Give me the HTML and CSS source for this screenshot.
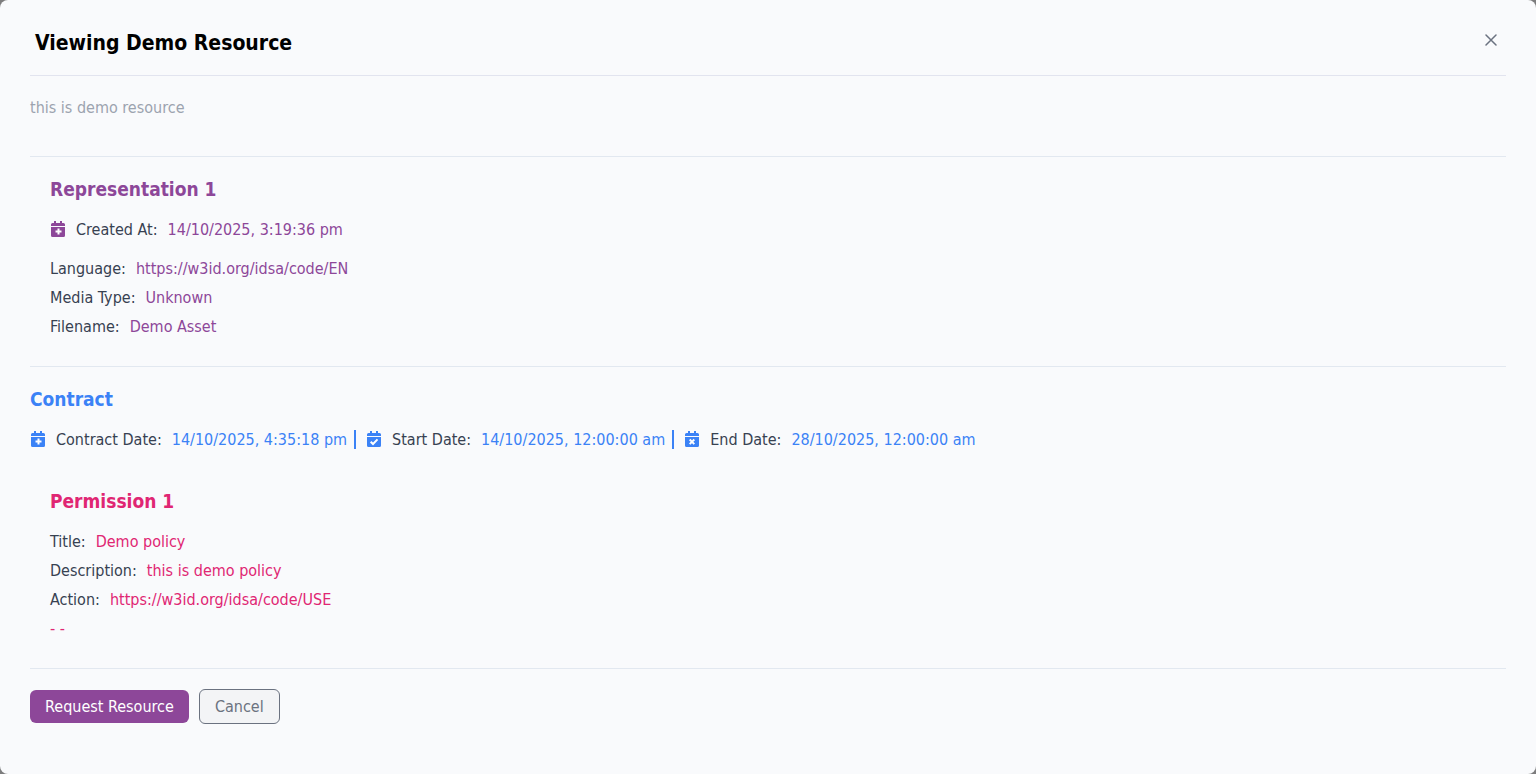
FILE: index.html
```html
<!DOCTYPE html>
<html lang="en">
<head>
    <meta charset="UTF-8">
    <meta name="viewport" content="width=device-width, initial-scale=1.0">
    <title>Viewing Demo Resource</title>
    <link rel="stylesheet" href="styles.css">
</head>
<body>
    <main class="modal">
        <header class="modal-header">
            <h1>Viewing Demo Resource</h1>
            <button type="button" class="close" aria-label="Close">
                <svg viewBox="0 0 12 12"><path d="M1 1l10 10M11 1L1 11"/></svg>
            </button>
        </header>
        <p class="description">this is demo resource</p>

        <section class="section representation">
            <h2>Representation 1</h2>
            <div class="dates">
                <div class="field">
                    <svg class="icon" viewBox="0 0 14 16"><path d="M3 0h2v2h4V0h2v2h1.500a1.500 1.500 0 0 1 1.500 1.500V5H0V3.500A1.500 1.500 0 0 1 1.500 2H3zM0 6h14v8.500a1.500 1.500 0 0 1-1.500 1.500h-11A1.500 1.500 0 0 1 0 14.500z"/><path class="mark" d="M7.500 7.500v6M4.500 10.500h6"/></svg>
                    <span>Created At:</span>
                    <span class="value">14/10/2025, 3:19:36 pm</span>
                </div>
            </div>
            <div class="fields">
                <div class="field"><span>Language:</span><span class="value">https://w3id.org/idsa/code/EN</span></div>
                <div class="field"><span>Media Type:</span><span class="value">Unknown</span></div>
                <div class="field"><span>Filename:</span><span class="value">Demo Asset</span></div>
            </div>
        </section>

        <section class="section contract">
            <h2>Contract</h2>
            <div class="dates">
                <div class="field">
                    <svg class="icon" viewBox="0 0 14 16"><path d="M3 0h2v2h4V0h2v2h1.500a1.500 1.500 0 0 1 1.500 1.500V5H0V3.500A1.500 1.500 0 0 1 1.500 2H3zM0 6h14v8.500a1.500 1.500 0 0 1-1.500 1.500h-11A1.500 1.500 0 0 1 0 14.500z"/><path class="mark" d="M7.500 7.500v6M4.500 10.500h6"/></svg>
                    <span>Contract Date:</span>
                    <span class="value">14/10/2025, 4:35:18 pm</span>
                </div>
                <div class="field">
                    <svg class="icon" viewBox="0 0 14 16"><path d="M3 0h2v2h4V0h2v2h1.500a1.500 1.500 0 0 1 1.500 1.500V5H0V3.500A1.500 1.500 0 0 1 1.500 2H3zM0 6h14v8.500a1.500 1.500 0 0 1-1.500 1.500h-11A1.500 1.500 0 0 1 0 14.500z"/><path class="mark" d="M3.700 10.700l2.300 2.300 4.500-4.600"/></svg>
                    <span>Start Date:</span>
                    <span class="value">14/10/2025, 12:00:00 am</span>
                </div>
                <div class="field">
                    <svg class="icon" viewBox="0 0 14 16"><path d="M3 0h2v2h4V0h2v2h1.500a1.500 1.500 0 0 1 1.500 1.500V5H0V3.500A1.500 1.500 0 0 1 1.500 2H3zM0 6h14v8.500a1.500 1.500 0 0 1-1.500 1.500h-11A1.500 1.500 0 0 1 0 14.500z"/><path class="mark" d="M4.700 8.500l4.600 4.600M9.300 8.500l-4.600 4.600"/></svg>
                    <span>End Date:</span>
                    <span class="value">28/10/2025, 12:00:00 am</span>
                </div>
            </div>
            <div class="permission">
                <h2>Permission 1</h2>
                <div class="fields">
                    <div class="field"><span>Title:</span><span class="value">Demo policy</span></div>
                    <div class="field"><span>Description:</span><span class="value">this is demo policy</span></div>
                    <div class="field"><span>Action:</span><span class="value">https://w3id.org/idsa/code/USE</span></div>
                    <div class="field"><span class="value">- -</span></div>
                </div>
            </div>
        </section>

        <footer class="section actions">
            <button type="button" class="btn btn-primary">Request Resource</button>
            <button type="button" class="btn btn-cancel">Cancel</button>
        </footer>
    </main>
</body>
</html>
```

FILE: styles.css
```css
* {
    box-sizing: border-box;
}
body {
    margin: 0;
    background-color: #7d7d7e;
    color: #374151;
    font-family: Tahoma, "DejaVu Sans Condensed", "Noto Sans", sans-serif;
    font-size: 16px;
    line-height: 19px;
}
h1, h2, p {
    margin: 0;
}
.modal {
    min-height: 100vh;
    padding: 20px 30px;
    border-radius: 8px;
    background-color: #f9fafc;
}
.modal-header {
    display: flex;
    justify-content: space-between;
    align-items: flex-start;
    padding: 10px 5px 18px;
    border-bottom: 1px solid #e2e4ef;
}
h1 {
    color: #000;
    font-size: 21px;
    line-height: 27px;
}
.close {
    display: flex;
    padding: 4px;
    border: none;
    background: none;
    color: #6b7280;
    cursor: pointer;
}
.close svg {
    width: 12px;
    height: 12px;
    fill: none;
    stroke: currentColor;
    stroke-width: 1.5;
    stroke-linecap: round;
}
.description {
    padding: 22px 0 39px;
    color: #9ca3af;
}
.section {
    padding: 20px 0 30px;
    border-top: 1px solid #e2e8f0;
}
h2 {
    margin-bottom: 19px;
    font-size: 19px;
    line-height: 24px;
}
.representation {
    color: #8d4799;
}
.representation > * {
    margin-left: 20px;
}
.contract {
    color: #3b82f6;
}
.permission {
    margin: 40px 0 0 20px;
    color: #e02673;
}
.dates {
    display: flex;
    flex-wrap: wrap;
}
.representation .dates {
    margin-bottom: 20px;
}
.fields {
    display: flex;
    flex-direction: column;
    gap: 10px;
}
.field {
    display: flex;
    gap: 10px;
    color: #374151;
}
.representation .value,
.representation .icon {
    color: #8d4799;
}
.contract .value,
.contract .icon {
    color: #3b82f6;
}
.permission .value {
    color: #e02673;
}
.dates .field + .field {
    margin-left: 7px;
    padding-left: 10px;
    border-left: 2px solid #3b82f6;
}
.icon {
    width: 14px;
    height: 16px;
    margin: 1px;
    fill: currentColor;
}
.icon .mark {
    fill: none;
    stroke: #fff;
    stroke-width: 2;
}
.actions {
    display: flex;
    align-items: center;
    gap: 10px;
}
.btn {
    padding: 7px 15px;
    border: none;
    border-radius: 6px;
    font: inherit;
    cursor: pointer;
}
.btn-primary {
    background-color: #8d4799;
    color: #fff;
}
.btn-cancel {
    border: 1px solid #6b7280;
    background-color: #f3f4f6;
    color: #6b7280;
}
```
